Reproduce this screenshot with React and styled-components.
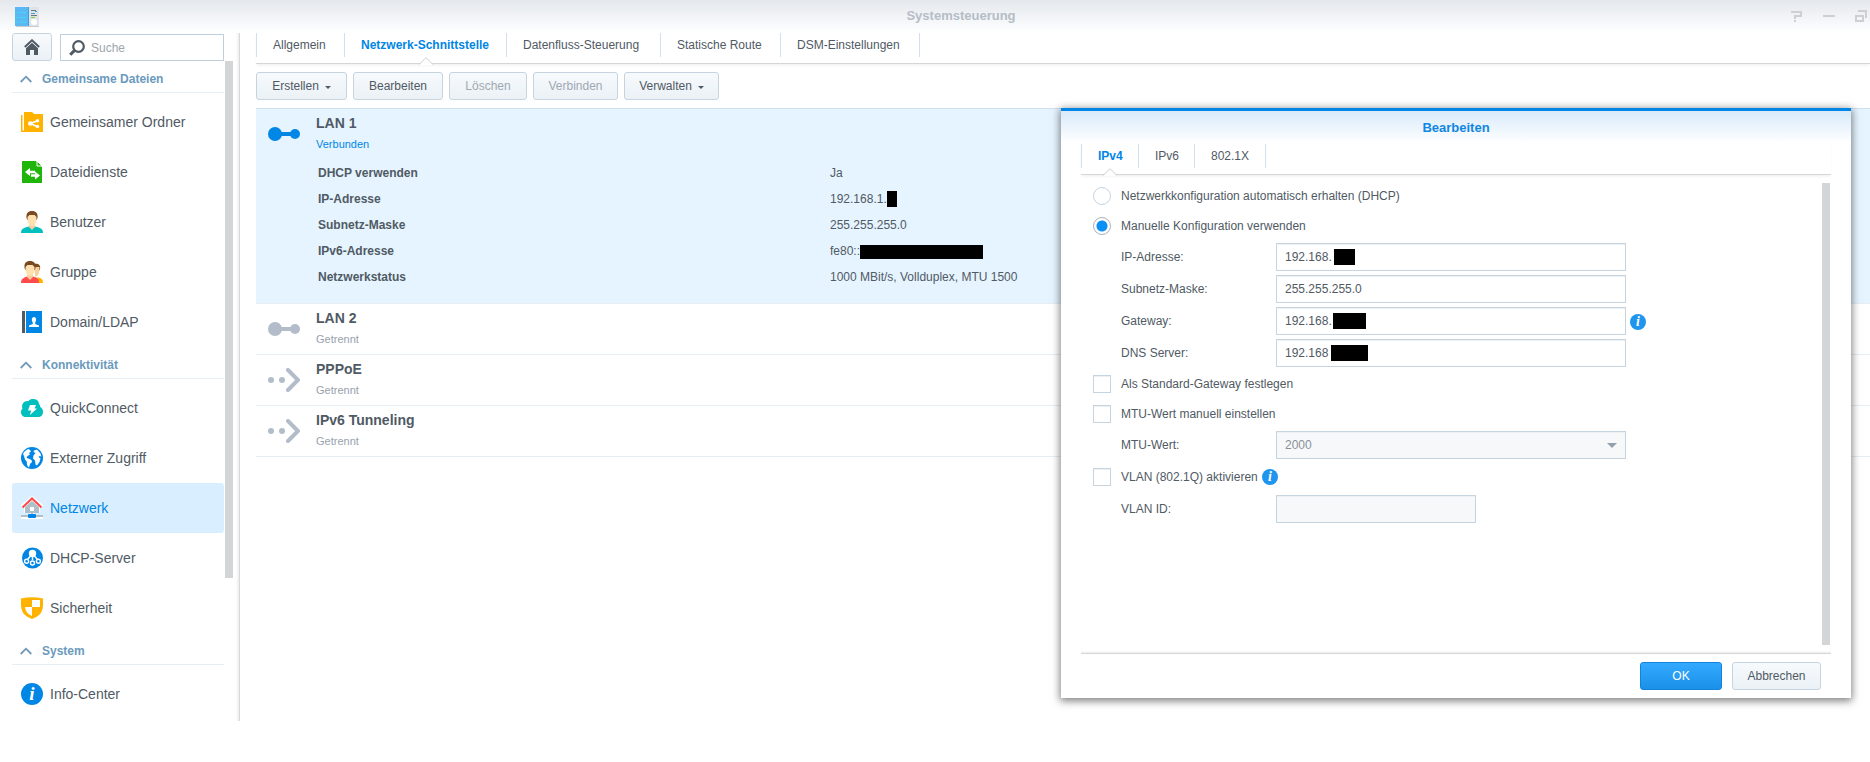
import { useState } from "react";
import styled, { createGlobalStyle, css } from "styled-components";

const GlobalStyle = createGlobalStyle`
  * {
    box-sizing: border-box;
  }
  body {
    margin: 0;
    background: #fff;
    color: #505a64;
    font: 12px/16px "Liberation Sans", Arial, sans-serif;
    overflow-x: hidden;
  }
  button, input, select {
    font: inherit;
    color: inherit;
    margin: 0;
  }
  button {
    cursor: pointer;
  }
  svg {
    display: block;
    flex: none;
  }
`;

/* icons */

const LogoIcon = () => (
  <svg width="24" height="20" viewBox="0 0 24 20">
    <rect x="1" y="18" width="23" height="2" fill="#c9cdd2" />
    <rect x="14" width="10" height="19" fill="#dfe3e6" />
    <rect width="14" height="19" fill="#5cb8f2" />
    <rect x="13" width="1" height="19" fill="#3f9fdf" />
    <path d="M1 5.5h1M4 5.5h7M1 10.5h2M5 10.5h6M1 15h2M5 15h6" stroke="#3ddcf0" strokeWidth="1" />
    <path d="M16 3.5h5" stroke="#6b7680" strokeWidth="1" />
    <path d="M16 6.5h4M20 4.5h2" stroke="#38a8ee" strokeWidth="1" />
    <path d="M16 8.5h6" stroke="#6b7680" strokeWidth="1" />
    <path d="M16 10.5h4" stroke="#7fd33a" strokeWidth="1" />
    <circle cx="19" cy="15" r="3" fill="#fff" />
  </svg>
);

const HomeIcon = () => (
  <svg width="16" height="16" viewBox="0 0 16 16">
    <path d="M.8 8L8 1.3 15.200 8" fill="none" stroke="#505a64" strokeWidth="2" />
    <path d="M2 9.200L8 3.800l6 5.400V16h-4v-5H6v5H2z" fill="#505a64" />
  </svg>
);

const SearchIcon = () => (
  <svg width="16" height="16" viewBox="0 0 16 16">
    <circle cx="9.500" cy="6.500" r="5.300" fill="none" stroke="#505a64" strokeWidth="2.200" />
    <path d="M5.600 10.400L1.200 14.800" stroke="#505a64" strokeWidth="3" />
  </svg>
);

const ChevronIcon = () => (
  <svg width="12" height="8" viewBox="0 0 12 8">
    <path d="M.7 7L6 1.700 11.300 7" fill="none" stroke="#7398b5" strokeWidth="1.800" />
  </svg>
);

const FolderIcon = () => (
  <svg width="22" height="22" viewBox="0 0 22 22">
    <path d="M0 4h1.500v15.500H3V21H0z" fill="#ffb300" />
    <path d="M3 1h8l2 2h9v18H3z" fill="#ffb300" />
    <path d="M17 9.500L9.500 12.500 17 16" fill="none" stroke="#fff" strokeWidth="1.600" />
    <circle cx="9.300" cy="12.500" r="2.300" fill="#fff" />
    <circle cx="16.500" cy="9.700" r="1.700" fill="#fff" />
    <circle cx="16.500" cy="15.500" r="1.700" fill="#fff" />
  </svg>
);

const FileIcon = () => (
  <svg width="22" height="22" viewBox="0 0 22 22">
    <path d="M1 0h14l6 6v16H1z" fill="#1fb50a" />
    <path d="M16 0l5 5h-5z" fill="#1fb50a" stroke="#fff" strokeWidth="1" />
    <path d="M4 11l5-4v2.800h5v2.400H9V15zM19 14.500l-5-4v2.800h-4v2.400h4v2.800z" fill="#fff" />
  </svg>
);

const UserIcon = () => (
  <svg width="22" height="22" viewBox="0 0 22 22">
    <path d="M0 22c0-4 2-5 8-6.500h6c6 1.500 8 2.500 8 6.500z" fill="#00bfbf" />
    <path d="M8 12h6v4l-3 3-3-3z" fill="#f8cf9a" />
    <path d="M5.500 7C5 2 7 0 11 0s6 2 5.500 7l-1 2h-9z" fill="#7a4a1e" />
    <path d="M6.500 6l2-2h5l2 2c0 6-1.500 9-4.500 9s-4.500-3-4.500-9z" fill="#ffe0b0" />
  </svg>
);

const GroupIcon = () => (
  <svg width="22" height="22" viewBox="0 0 22 22">
    <path d="M16 16c4 1 6 2 6 6h-4z" fill="#ffb300" />
    <path d="M13 3c4-1 7 1 6 5l-1 2h-4z" fill="#7a4a1e" />
    <path d="M13 6h5.500c0 5-1 9-4 10z" fill="#f8cf9a" />
    <path d="M0 22c0-4 2-5 6-6.500h6c5 1.500 6 2.500 6 6.500z" fill="#ff4b4b" />
    <path d="M6 12h6v4l-3 3-3-3z" fill="#f8cf9a" />
    <path d="M3.500 7C3 2 5 0 9 0s6 2 5.500 7l-1 2h-9z" fill="#7a4a1e" />
    <path d="M4.500 6l2-2h5l2 2c0 6-1.500 9-4.500 9S4.500 12 4.500 6z" fill="#ffe0b0" />
  </svg>
);

const DomainIcon = () => (
  <svg width="22" height="22" viewBox="0 0 22 22">
    <rect x="1" width="3" height="22" fill="#505a64" />
    <rect x="5" width="16" height="22" fill="#0086e5" />
    <path d="M8 16v-1.500l3.800-1.500v-1.500C10.500 10 10.300 6 13 6s2.500 4 1.200 5.500V13l3.800 1.500V16z" fill="#fff" />
  </svg>
);

const CloudIcon = () => (
  <svg width="22" height="22" viewBox="0 0 22 22">
    <path
      d="M5 20c-3 0-5-2-5-5 0-1.500.7-2.500 1.500-3.200C0 7 3 3.500 7.500 4 9 2 11 1.800 13 2c3 .3 4.800 2 5 5 1 .8 1.300 1.800 1.200 3C21 11 22 12.500 22 15c0 3-2 5-5 5z"
      fill="#00bfbf"
    />
    <path d="M9 8h6l-1.500 3.500H16L9 18l1.200-4.500H7z" fill="#fff" />
  </svg>
);

const GlobeIcon = () => (
  <svg width="22" height="22" viewBox="0 0 22 22">
    <circle cx="11" cy="11" r="11" fill="#0086e5" />
    <path
      d="M2 7c1-2.500 3-4 5.500-5l1.500 1 1 1.500L8 6l1 1.500L6.500 9l-1 2 2 .5 3 1.500.5 2-2 2-1 3.500C6 19 5.500 17 6 15L4 12.500 3 9z"
      fill="#fff"
    />
    <path
      d="M13 3.500L16 2.500l3.500 4 .8 3-1.800-.5-1 1 2 1.500-1 3.500-2.500 3.500-1.500-1-.5-4-2-2 .5-3L14.500 6l-2-1z"
      fill="#fff"
    />
  </svg>
);

const NetworkIcon = () => (
  <svg width="24" height="24" viewBox="0 0 24 24">
    <path d="M2 11L12 2l10 9" fill="none" stroke="#fff" strokeWidth="4" />
    <path d="M4 17v-6l8-7 8 7v6H14v2h9v4H1v-4h9v-2z" fill="#fff" />
    <path d="M5 17v-6l7-6 7 6v6z" fill="#b0bec9" />
    <rect x="10" y="11" width="4" height="4" fill="#fff" />
    <path d="M2.500 11.500L12 2.500l9.500 9" fill="none" stroke="#ff4b4b" strokeWidth="2" />
    <path d="M1 20h22" stroke="#b0bec9" strokeWidth="2" />
    <rect x="11" y="17" width="2" height="2" fill="#b0bec9" />
    <rect x="8" y="18" width="8" height="4" rx="1" fill="#0086e5" />
  </svg>
);

const DhcpIcon = () => (
  <svg width="22" height="22" viewBox="0 0 22 22">
    <circle cx="11.500" cy="11" r="10.500" fill="#0086e5" />
    <circle cx="11.500" cy="6.500" r="3.700" fill="#fff" />
    <g fill="none" stroke="#fff" strokeWidth="1.400">
      <path d="M11.500 9v4M9.500 9L6.500 12.500M13.500 9l3 3.500" />
      <circle cx="5.600" cy="14.300" r="2" />
      <circle cx="11.500" cy="16" r="2" />
      <circle cx="17.400" cy="14.300" r="2" />
    </g>
  </svg>
);

const ShieldIcon = () => (
  <svg width="22" height="22" viewBox="0 0 22 22">
    <path d="M0 1.500Q11-1 22 1.500V7c0 8-3 12-11 15C3 19 0 15 0 7z" fill="#ffb300" />
    <path d="M11 3h8v7h-8zM4 10h7v9c-4-2-6.500-4.500-7-9z" fill="#fff" />
  </svg>
);

const InfoIcon = ({ size = 16 }) => (
  <svg width={size} height={size} viewBox="0 0 22 22" overflow="visible" aria-hidden="true">
    <circle cx="11" cy="11" r="11" fill={size > 16 ? "#0086e5" : "#1f95ee"} />
    <text
      x="11"
      y="17"
      textAnchor="middle"
      fill="#fff"
      fontFamily="Liberation Serif, serif"
      fontStyle="italic"
      fontWeight="700"
      fontSize="19"
    >
      i
    </text>
  </svg>
);

const LanIcon = () => (
  <svg width="32" height="24" viewBox="0 0 32 24" fill="currentColor">
    <circle cx="7" cy="12" r="7" />
    <circle cx="27" cy="12" r="5" />
    <rect x="10" y="10" width="16" height="4" />
  </svg>
);

const TunnelIcon = () => (
  <svg width="32" height="24" viewBox="0 0 32 24" fill="currentColor">
    <circle cx="3" cy="12" r="3" />
    <circle cx="14" cy="12" r="3" />
    <path d="M20 2l10 10-10 10" fill="none" stroke="currentColor" strokeWidth="4" strokeLinecap="round" />
  </svg>
);

const CaretIcon = () => (
  <svg width="6" height="6" viewBox="0 0 6 6">
    <path d="M0 3h6L3 6z" fill="#505a64" />
  </svg>
);

/* data */

const navigation = [
  {
    title: "Gemeinsame Dateien",
    items: [
      { label: "Gemeinsamer Ordner", Icon: FolderIcon },
      { label: "Dateidienste", Icon: FileIcon },
      { label: "Benutzer", Icon: UserIcon },
      { label: "Gruppe", Icon: GroupIcon },
      { label: "Domain/LDAP", Icon: DomainIcon },
    ],
  },
  {
    title: "Konnektivität",
    items: [
      { label: "QuickConnect", Icon: CloudIcon },
      { label: "Externer Zugriff", Icon: GlobeIcon },
      { label: "Netzwerk", Icon: NetworkIcon, active: true },
      { label: "DHCP-Server", Icon: DhcpIcon },
      { label: "Sicherheit", Icon: ShieldIcon },
    ],
  },
  {
    title: "System",
    items: [{ label: "Info-Center", Icon: () => <InfoIcon size={22} /> }],
  },
];

const mainTabs = [
  { label: "Allgemein", width: 88 },
  { label: "Netzwerk-Schnittstelle", width: 162 },
  { label: "Datenfluss-Steuerung", width: 154 },
  { label: "Statische Route", width: 120 },
  { label: "DSM-Einstellungen", width: 140 },
];

const dialogTabs = [
  { label: "IPv4", width: 57 },
  { label: "IPv6", width: 56 },
  { label: "802.1X", width: 72 },
];

const connections = [
  { name: "PPPoE", Icon: TunnelIcon },
  { name: "IPv6 Tunneling", Icon: TunnelIcon },
];

/* shared parts */

const Button = styled.button`
  display: flex;
  flex: none;
  align-items: center;
  justify-content: center;
  gap: 6px;
  height: 28px;
  min-width: ${(p) => p.$minWidth || 0}px;
  padding: 0 14px;
  border: 1px solid ${(p) => (p.$primary ? "#1283dc" : "#c6d4e0")};
  border-radius: 3px;
  background: ${(p) =>
    p.$primary ? "linear-gradient(#33a9ff, #1a90e8)" : "linear-gradient(#f7fafd, #ebf1f6)"};
  color: ${(p) => (p.$primary ? "#fff" : "#505a64")};
  &:disabled {
    color: #a0a8b2;
    cursor: default;
  }
`;

const TabStrip = styled.div`
  display: flex;
  padding-bottom: 6px;
  border-bottom: 1px solid #d6d6d6;
  box-shadow: 0 2px 3px -1px rgba(0, 0, 0, 0.08);
`;

const Tab = styled.button`
  position: relative;
  width: ${(p) => p.$width}px;
  height: 24px;
  padding: 0 0 0 16px;
  border: 0;
  border-left: 1px solid #d3e0ec;
  background: none;
  text-align: left;
  white-space: nowrap;
  color: ${(p) => (p.$active ? "#0086e5" : "#505a64")};
  font-weight: ${(p) => (p.$active ? 700 : 400)};
  &:last-child {
    border-right: 1px solid #d3e0ec;
  }
`;

const Notch = styled.svg`
  position: absolute;
  top: 24px;
  left: calc(50% - 7px);
`;

const Redacted = styled.span`
  display: inline-block;
  vertical-align: middle;
  width: ${(p) => p.$width}px;
  height: ${(p) => p.$height || 16}px;
  background: #000;
`;

const ScrollThumb = styled.div`
  flex: none;
  width: 8px;
  height: ${(p) => p.$height}px;
  background: #d4d5d7;
`;

function Tabs({ items, initial }) {
  const [active, setActive] = useState(initial);
  return (
    <TabStrip role="tablist">
      {items.map(({ label, width }) => (
        <Tab
          key={label}
          role="tab"
          aria-selected={label === active}
          $active={label === active}
          $width={width}
          onClick={() => setActive(label)}
        >
          {label}
          {label === active && (
            <Notch width="14" height="8" viewBox="0 0 14 8">
              <path d="M0 8L7 1l7 7z" fill="#fff" />
              <path d="M0 7.500L7 .7l7 6.800" fill="none" stroke="#d0d0d0" />
            </Notch>
          )}
        </Tab>
      ))}
    </TabStrip>
  );
}

/* window */

const Window = styled.div`
  position: relative;
`;

const TitleBar = styled.header`
  display: grid;
  grid-template-columns: auto 1fr auto;
  align-items: center;
  height: 33px;
  padding: 0 3px 0 15px;
  background: linear-gradient(#e4e8ed, #fff);
`;

const Title = styled.h1`
  margin: 0;
  padding: 0 0 2px 92px;
  text-align: center;
  font-size: 13px;
  color: #b4bdc8;
`;

const WindowControls = styled.div`
  display: flex;
  gap: 20px;
  padding-bottom: 2px;
`;

const ControlButton = styled.button`
  width: 12px;
  height: 12px;
  padding: 0;
  border: 0;
  background: none;
  color: #cdcfd3;
`;

const Body = styled.div`
  display: flex;
`;

const Sidebar = styled.aside`
  flex: none;
  width: 240px;
  padding-left: 12px;
  border-right: 1px solid #d9d9d9;
  box-shadow: inset -3px 0 3px -2px rgba(0, 0, 0, 0.1);
`;

const SearchBar = styled.div`
  display: flex;
  gap: 8px;
  margin-right: 15px;
`;

const HomeButton = styled(Button)`
  width: 40px;
  padding: 0;
`;

const SearchBox = styled.label`
  display: flex;
  flex: 1;
  align-items: center;
  gap: 6px;
  min-width: 0;
  height: 27px;
  margin-top: 1px;
  padding-left: 8px;
  border: 1px solid #c0cfdc;
`;

const SearchInput = styled.input`
  flex: 1;
  min-width: 0;
  padding: 0;
  border: 0;
  outline: 0;
  background: none;
  &::placeholder {
    color: #a0a4ac;
  }
`;

const NavScroller = styled.div`
  display: flex;
  gap: 1px;
  padding-bottom: 2px;
`;

const Nav = styled.nav`
  width: 212px;
`;

const NavHeading = styled.h2`
  display: flex;
  align-items: center;
  gap: 10px;
  height: 32px;
  margin: 0 0 4px;
  padding: 4px 0 0 8px;
  border-bottom: 1px solid #e4eef5;
  font-size: 12px;
  color: #6a9abd;
`;

const NavItem = styled.a`
  display: flex;
  align-items: center;
  height: 50px;
  padding-left: 8px;
  border-radius: 3px;
  font-size: 14px;
  text-decoration: none;
  color: ${(p) => (p.$active ? "#0086e5" : "#505a64")};
  background: ${(p) => (p.$active ? "#d9eeff" : "none")};
`;

const NavIcon = styled.span`
  display: flex;
  justify-content: center;
  width: 24px;
  margin-right: 6px;
`;

const Main = styled.main`
  flex: 1;
  min-width: 0;
  padding-left: 16px;
`;

const Toolbar = styled.div`
  display: flex;
  gap: 6px;
  padding: 8px 0;
`;

const InterfaceList = styled.div`
  border-top: 1px solid #d0dfec;
`;

const Interface = styled.section`
  padding-left: 12px;
  border-bottom: 1px solid #e6edf3;
  background: ${(p) => (p.$active ? "#e6f4ff" : "#fff")};
`;

const InterfaceHead = styled.div`
  display: flex;
  align-items: center;
  gap: 16px;
  height: 50px;
  color: ${(p) => (p.$active ? "#0086e5" : "#b2bdc9")};
`;

const InterfaceLabel = styled.div`
  padding-bottom: 2px;
`;

const InterfaceName = styled.h3`
  margin: 0 0 5px;
  font-size: 14px;
  color: #505a64;
`;

const InterfaceStatus = styled.div`
  font-size: 11px;
  color: ${(p) => (p.$active ? "#0086e5" : "#98a2ad")};
`;

const Details = styled.table`
  width: 100%;
  padding: 1px 0 13px 50px;
  border-spacing: 0;
  table-layout: fixed;
  th,
  td {
    height: 26px;
    padding: 0;
    text-align: left;
    white-space: nowrap;
  }
  th {
    width: 512px;
  }
`;

function NetworkInterface({ name, Icon, active, children }) {
  return (
    <Interface $active={active}>
      <InterfaceHead $active={active}>
        <Icon />
        <InterfaceLabel>
          <InterfaceName>{name}</InterfaceName>
          <InterfaceStatus $active={active}>{active ? "Verbunden" : "Getrennt"}</InterfaceStatus>
        </InterfaceLabel>
      </InterfaceHead>
      {children}
    </Interface>
  );
}

/* edit dialog */

const Dialog = styled.div`
  position: absolute;
  top: 108px;
  right: 19px;
  width: 790px;
  padding: 0 20px 8px;
  border-top: 3px solid #0086e5;
  background: #fff linear-gradient(#d8eafa, #fff) no-repeat 0 0 / 100% 32px;
  box-shadow: 0 2px 8px 1px rgba(0, 0, 0, 0.5);
`;

const DialogTitle = styled.h2`
  margin: 0;
  height: 33px;
  line-height: 33px;
  text-align: center;
  font-size: 13px;
  color: #0f86e3;
`;

const DialogBody = styled.div`
  display: flex;
  justify-content: space-between;
  height: 479px;
  padding: 6px 1px 8px 12px;
  border-bottom: 1px solid #d6d6d6;
  box-shadow: inset 0 -2px 2px -1px rgba(0, 0, 0, 0.08);
`;

const DialogScroll = styled(ScrollThumb)`
  align-self: flex-end;
`;

const Choice = styled.label`
  display: flex;
  align-items: center;
  gap: 10px;
`;

const ChoiceRow = styled.div`
  display: flex;
  align-items: center;
  gap: 4px;
  height: ${(p) => (p.$tall ? 32 : 30)}px;
`;

const choiceBox = css`
  appearance: none;
  width: 18px;
  height: 18px;
  border: 1px solid #c6d4e0;
  background: #fff;
`;

const Radio = styled.input.attrs({ type: "radio" })`
  ${choiceBox}
  border-radius: 50%;
  &:checked {
    border-color: #a6b2be;
    background: radial-gradient(circle, #0a8ff5 5px, #fff 6px);
  }
`;

const Checkbox = styled.input.attrs({ type: "checkbox" })`
  ${choiceBox}
  box-shadow: inset 0 1px 0 #eef1f4;
  &:checked {
    background: #0086e5;
  }
`;

const Field = styled.div`
  display: grid;
  grid-template-columns: 155px 350px auto;
  align-items: center;
  height: 32px;
  padding-left: 28px;
`;

const Control = styled.div`
  position: relative;
  width: ${(p) => (p.$short ? 200 : 350)}px;
`;

const fieldBox = css`
  display: block;
  width: 100%;
  height: 28px;
  padding: 0 8px;
  border: 1px solid #c6d4e0;
  border-radius: 0;
  background: #fff;
  box-shadow: inset 0 1px 0 #eef1f4;
  &:disabled {
    background: #f6f8fa;
    color: #8b9097;
    opacity: 1;
  }
`;

const TextInput = styled.input`
  ${fieldBox}
`;

const Select = styled.select`
  ${fieldBox}
  appearance: none;
`;

const SelectArrow = styled.svg`
  position: absolute;
  top: 12px;
  right: 9px;
  pointer-events: none;
`;

const InputMask = styled(Redacted)`
  position: absolute;
  top: 6px;
  left: ${(p) => p.$left}px;
`;

const InfoSlot = styled.span`
  padding: 2px 0 0 4px;
`;

const DialogFooter = styled.footer`
  display: flex;
  justify-content: flex-end;
  gap: 10px;
  padding: 8px 10px 0 0;
`;

function TextField({ id, label, value, mask, info, ...rest }) {
  return (
    <Field>
      <label htmlFor={id}>{label}</label>
      <Control $short={rest.disabled}>
        <TextInput id={id} defaultValue={value} {...rest} />
        {mask && <InputMask $left={mask.left} $width={mask.width} />}
      </Control>
      {info && (
        <InfoSlot>
          <InfoIcon />
        </InfoSlot>
      )}
    </Field>
  );
}

function EditDialog() {
  return (
    <Dialog role="dialog" aria-labelledby="dialog-title">
      <DialogTitle id="dialog-title">Bearbeiten</DialogTitle>
      <Tabs items={dialogTabs} initial="IPv4" />
      <DialogBody>
        <div>
          <ChoiceRow>
            <Choice>
              <Radio name="mode" />
              Netzwerkkonfiguration automatisch erhalten (DHCP)
            </Choice>
          </ChoiceRow>
          <ChoiceRow>
            <Choice>
              <Radio name="mode" defaultChecked />
              Manuelle Konfiguration verwenden
            </Choice>
          </ChoiceRow>
          <TextField id="ip" label="IP-Adresse:" value="192.168." mask={{ left: 58, width: 21 }} />
          <TextField id="subnet" label="Subnetz-Maske:" value="255.255.255.0" />
          <TextField id="gateway" label="Gateway:" value="192.168." mask={{ left: 57, width: 33 }} info />
          <TextField id="dns" label="DNS Server:" value="192.168" mask={{ left: 55, width: 37 }} />
          <ChoiceRow>
            <Choice>
              <Checkbox />
              Als Standard-Gateway festlegen
            </Choice>
          </ChoiceRow>
          <ChoiceRow>
            <Choice>
              <Checkbox />
              MTU-Wert manuell einstellen
            </Choice>
          </ChoiceRow>
          <Field>
            <label htmlFor="mtu">MTU-Wert:</label>
            <Control>
              <Select id="mtu" disabled>
                <option>2000</option>
              </Select>
              <SelectArrow width="10" height="5" viewBox="0 0 10 5">
                <path d="M0 0h10L5 5z" fill="#94a0ac" />
              </SelectArrow>
            </Control>
          </Field>
          <ChoiceRow $tall>
            <Choice>
              <Checkbox />
              VLAN (802.1Q) aktivieren
            </Choice>
            <InfoIcon />
          </ChoiceRow>
          <TextField id="vlan" label="VLAN ID:" disabled />
        </div>
        <DialogScroll $height={462} />
      </DialogBody>
      <DialogFooter>
        <Button $primary $minWidth={82}>
          OK
        </Button>
        <Button $minWidth={89}>Abbrechen</Button>
      </DialogFooter>
    </Dialog>
  );
}

export default function App() {
  return (
    <Window>
      <GlobalStyle />
      <TitleBar>
        <LogoIcon />
        <Title>Systemsteuerung</Title>
        <WindowControls>
          <ControlButton aria-label="Hilfe">
            <svg width="12" height="12" viewBox="0 0 12 12" fill="none" stroke="currentColor" strokeWidth="2">
              <path d="M0 2h10v4H4v3M4 10v2" />
            </svg>
          </ControlButton>
          <ControlButton aria-label="Minimieren">
            <svg width="12" height="12" viewBox="0 0 12 12">
              <path d="M0 6h12" stroke="currentColor" strokeWidth="2" />
            </svg>
          </ControlButton>
          <ControlButton aria-label="Verkleinern">
            <svg width="12" height="12" viewBox="0 0 12 12" fill="none" stroke="currentColor" strokeWidth="2">
              <path d="M3 1h8v7M1 6h7v5H1z" />
            </svg>
          </ControlButton>
        </WindowControls>
      </TitleBar>
      <Body>
        <Sidebar>
          <SearchBar>
            <HomeButton aria-label="Startseite">
              <HomeIcon />
            </HomeButton>
            <SearchBox>
              <SearchIcon />
              <SearchInput placeholder="Suche" aria-label="Suche" />
            </SearchBox>
          </SearchBar>
          <NavScroller>
            <Nav>
              {navigation.map((group) => (
                <div key={group.title}>
                  <NavHeading>
                    <ChevronIcon />
                    {group.title}
                  </NavHeading>
                  {group.items.map(({ label, Icon, active }) => (
                    <NavItem key={label} href="#" $active={active}>
                      <NavIcon>
                        <Icon />
                      </NavIcon>
                      {label}
                    </NavItem>
                  ))}
                </div>
              ))}
            </Nav>
            <ScrollThumb $height={517} />
          </NavScroller>
        </Sidebar>
        <Main>
          <Tabs items={mainTabs} initial="Netzwerk-Schnittstelle" />
          <Toolbar>
            <Button $minWidth={91}>
              Erstellen <CaretIcon />
            </Button>
            <Button $minWidth={90}>Bearbeiten</Button>
            <Button $minWidth={78} disabled>
              Löschen
            </Button>
            <Button $minWidth={85} disabled>
              Verbinden
            </Button>
            <Button $minWidth={95}>
              Verwalten <CaretIcon />
            </Button>
          </Toolbar>
          <InterfaceList>
            <NetworkInterface name="LAN 1" Icon={LanIcon} active>
              <Details>
                <tbody>
                  <tr>
                    <th scope="row">DHCP verwenden</th>
                    <td>Ja</td>
                  </tr>
                  <tr>
                    <th scope="row">IP-Adresse</th>
                    <td>
                      192.168.1.
                      <Redacted $width={10} />
                    </td>
                  </tr>
                  <tr>
                    <th scope="row">Subnetz-Maske</th>
                    <td>255.255.255.0</td>
                  </tr>
                  <tr>
                    <th scope="row">IPv6-Adresse</th>
                    <td>
                      fe80::
                      <Redacted $width={123} $height={14} />
                    </td>
                  </tr>
                  <tr>
                    <th scope="row">Netzwerkstatus</th>
                    <td>1000 MBit/s, Vollduplex, MTU 1500</td>
                  </tr>
                </tbody>
              </Details>
            </NetworkInterface>
            <NetworkInterface name="LAN 2" Icon={LanIcon} />
            {connections.map((connection) => (
              <NetworkInterface key={connection.name} {...connection} />
            ))}
          </InterfaceList>
        </Main>
      </Body>
      <EditDialog />
    </Window>
  );
}
